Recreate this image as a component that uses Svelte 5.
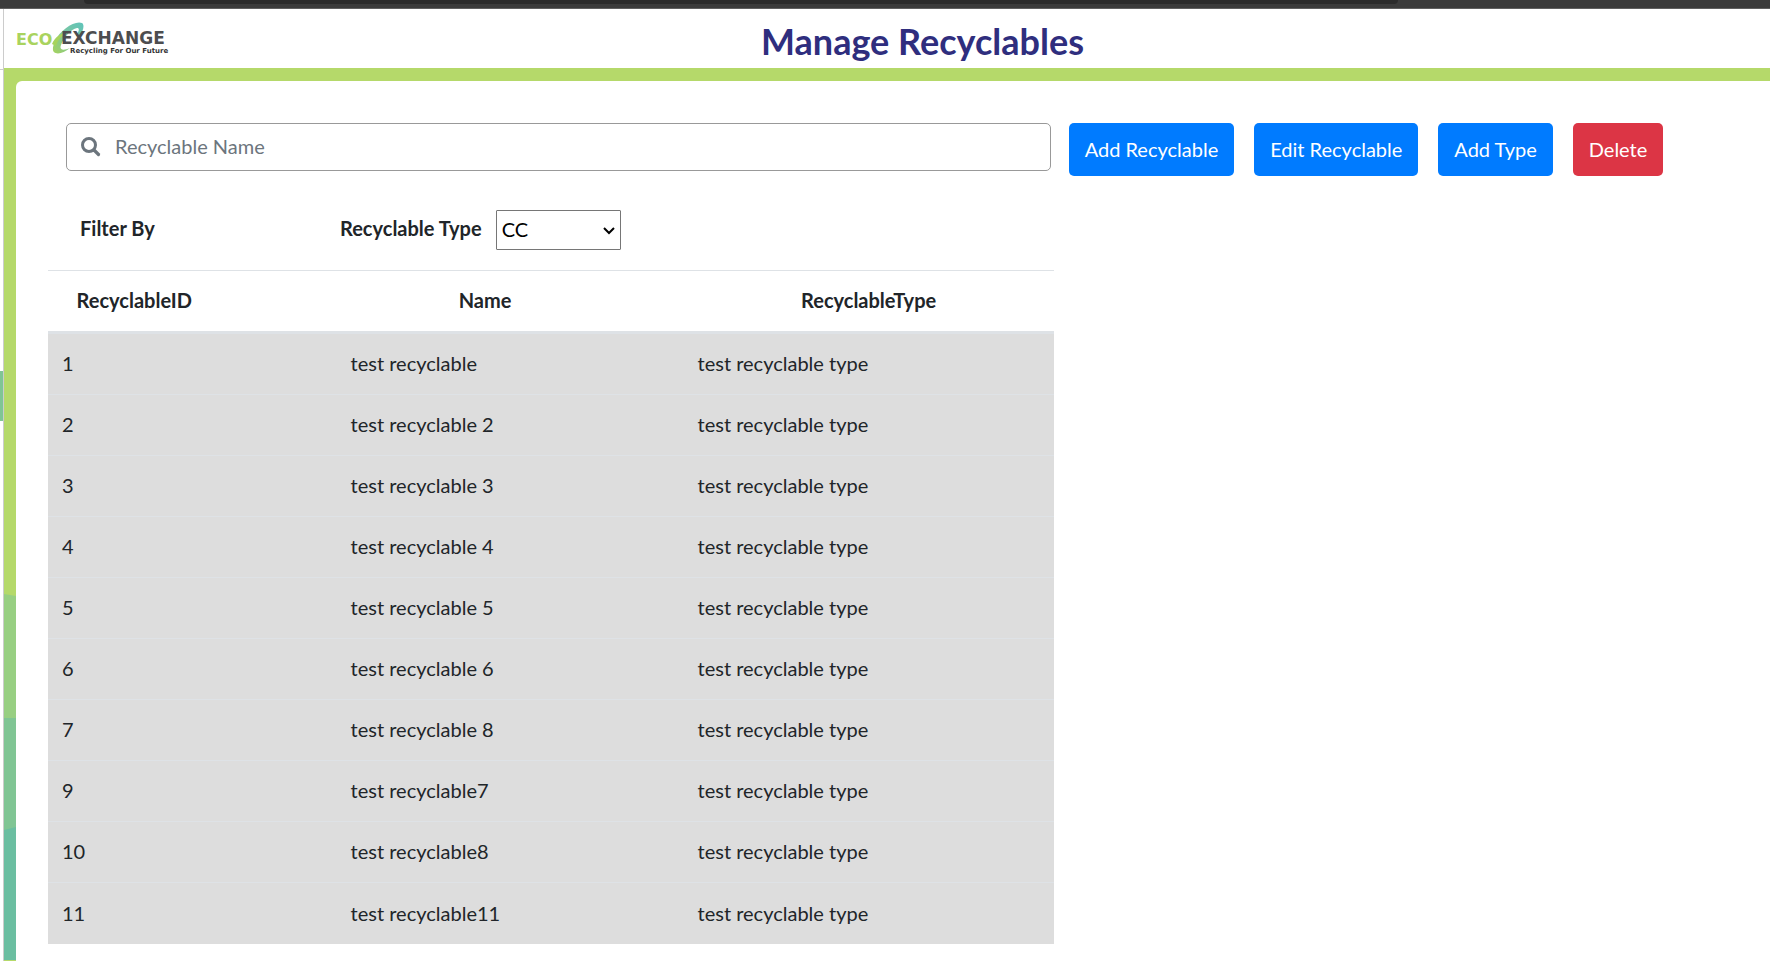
<script>
  let search = $state('')
  let selectedType = $state('CC')

  const types = ['CC', 'test recyclable type']

  const recyclables = [
    { id: 1, name: 'test recyclable', type: 'test recyclable type' },
    { id: 2, name: 'test recyclable 2', type: 'test recyclable type' },
    { id: 3, name: 'test recyclable 3', type: 'test recyclable type' },
    { id: 4, name: 'test recyclable 4', type: 'test recyclable type' },
    { id: 5, name: 'test recyclable 5', type: 'test recyclable type' },
    { id: 6, name: 'test recyclable 6', type: 'test recyclable type' },
    { id: 7, name: 'test recyclable 8', type: 'test recyclable type' },
    { id: 9, name: 'test recyclable7', type: 'test recyclable type' },
    { id: 10, name: 'test recyclable8', type: 'test recyclable type' },
    { id: 11, name: 'test recyclable11', type: 'test recyclable type' },
  ]

  let rows = $derived(
    recyclables.filter(r => r.name.toLowerCase().includes(search.trim().toLowerCase()))
  )
</script>

<div class="page">
  <div class="window-bar"><div class="address"></div></div>

  <div class="shell">
    <aside class="rail">
      <div class="rail-head"></div>
      <div class="rail-tab"></div>
    </aside>

    <div class="main">
      <header>
        <a class="logo" href="#home" aria-label="Eco Exchange home">
          <svg width="160" height="36" viewBox="0 0 160 36">
            <defs>
              <linearGradient id="swoosh" x1="1" y1="0" x2="0" y2="1">
                <stop offset="0" stop-color="#5fc4bb" />
                <stop offset="0.5" stop-color="#7cc6a0" />
                <stop offset="1" stop-color="#a6d35c" />
              </linearGradient>
            </defs>
            <path
              fill="url(#swoosh)"
              d="M69 2C62 -1 47 9 42 20C40 25 39 29 41 31C44 34 51 32 57 27C50 30 46 29 48 24C51 16 58 8 64 7C67 7 66 10 63 15H67C70 10 72 4 69 2Z"
            />
            <path fill="#a6d35c" d="M39 23C42 16 48 12 56 10C50 14 45 18 43 25Z" />
            <text class="word" x="3" y="24" fill="#a9d35e">ECO</text>
            <text class="word exchange" x="48" y="23" fill="#4d4d4f">EXCHANGE</text>
            <text class="tagline" x="57" y="32" fill="#333">Recycling For Our Future</text>
          </svg>
        </a>
        <h1>Manage Recyclables</h1>
      </header>

      <div class="backdrop">
        <svg class="waves" width="12" height="892" viewBox="0 0 12 892" aria-hidden="true">
          <path fill="#98cf82" d="M0 526L12 528V892H0Z" />
          <path fill="#80c594" d="M0 650H12V892H0Z" />
          <path fill="#6bbea1" d="M0 762L12 759V892H0Z" />
        </svg>

        <section class="card">
          <div class="left">
            <div class="search">
              <svg width="20" height="20" viewBox="0 0 20 20" aria-hidden="true">
                <circle cx="8" cy="8" r="6.500" fill="none" stroke="#6c757d" stroke-width="3" />
                <path d="M13 13L17.500 17.500" stroke="#6c757d" stroke-width="3.200" stroke-linecap="round" />
              </svg>
              <input type="text" placeholder="Recyclable Name" aria-label="Recyclable Name" bind:value={search} />
            </div>

            <div class="filters">
              <span class="filter-title">Filter By</span>
              <label for="type">Recyclable Type</label>
              <div class="select">
                <select id="type" bind:value={selectedType}>
                  {#each types as t}
                    <option value={t}>{t}</option>
                  {/each}
                </select>
                <svg width="12" height="8" viewBox="0 0 12 8" aria-hidden="true">
                  <path d="M1 1L6 6L11 1" fill="none" stroke="#000" stroke-width="2" />
                </svg>
              </div>
            </div>

            <table>
              <thead>
                <tr>
                  <th class="id">RecyclableID</th>
                  <th class="name">Name</th>
                  <th class="type">RecyclableType</th>
                </tr>
              </thead>
              <tbody>
                {#each rows as r (r.id)}
                  <tr>
                    <td>{r.id}</td>
                    <td>{r.name}</td>
                    <td>{r.type}</td>
                  </tr>
                {/each}
              </tbody>
            </table>
          </div>

          <div class="actions">
            <button type="button">Add Recyclable</button>
            <button type="button">Edit Recyclable</button>
            <button type="button">Add Type</button>
            <button type="button" class="danger">Delete</button>
          </div>
        </section>
      </div>
    </div>
  </div>
</div>

<style>
  :global(body) {
    background: #fff;
  }

  .page,
  .page * {
    box-sizing: border-box;
  }

  .page {
    min-height: 100vh;
    display: flex;
    flex-direction: column;
    font-family: Lato, sans-serif;
    font-size: 20px;
    line-height: 30px;
    color: #212529;
  }

  .window-bar {
    height: 9px;
    background: #3b3b3b;
    border-bottom: 1px solid #606060;
  }
  .address {
    width: 1314px;
    max-width: 80%;
    height: 4px;
    margin-left: 84px;
    background: #2b2b2b;
    border-radius: 0 0 4px 4px;
  }

  .shell {
    flex: 1;
    display: flex;
  }

  .rail {
    width: 4px;
    flex-shrink: 0;
    border-right: 1px solid #ccc;
  }
  .rail-head {
    height: 61px;
    border-bottom: 1px solid #ccc;
  }
  .rail-tab {
    height: 50px;
    margin-top: 301px;
    background: #80c594;
  }

  .main {
    flex: 1;
    min-width: 0;
    display: flex;
    flex-direction: column;
  }

  header {
    height: 59px;
    display: grid;
    grid-template-columns: 1fr auto 1fr;
    align-items: center;
  }
  .logo {
    display: flex;
    padding-left: 9px;
  }
  .word {
    font-family: "DejaVu Sans", sans-serif;
    font-size: 16px;
    font-weight: 700;
  }
  .word.exchange {
    font-size: 17px;
  }
  .tagline {
    font-family: "DejaVu Sans", sans-serif;
    font-size: 7px;
    font-weight: 700;
  }
  h1 {
    grid-column: 2;
    margin: 4px 0 0 71px;
    font-size: 36px;
    line-height: 44px;
    font-weight: 700;
    color: #2f2e7e;
  }

  .backdrop {
    flex: 1;
    display: flex;
    padding-top: 13px;
    padding-left: 12px;
    position: relative;
    overflow: hidden;
    background: #b5d96a;
  }
  .waves {
    position: absolute;
    left: 0;
    top: 0;
  }

  .card {
    flex: 1;
    display: grid;
    grid-template-columns: 58.4% 1fr;
    align-items: start;
    padding: 42px 0 12px 32px;
    background: #fff;
    border-top-left-radius: 6px;
  }

  .search {
    height: 48px;
    margin: 0 3px 0 18px;
    padding: 0 14px;
    display: flex;
    align-items: center;
    gap: 14px;
    border: 1px solid #999;
    border-radius: 5px;
  }
  .search input {
    flex: 1;
    min-width: 0;
    border: 0;
    outline: 0;
    padding: 0 0 2px;
    background: transparent;
    font: inherit;
    color: inherit;
  }
  .search input::placeholder {
    color: #6c757d;
    opacity: 1;
  }

  .filters {
    display: flex;
    align-items: center;
    height: 40px;
    margin: 39px 0 20px;
    padding-left: 32px;
    font-weight: 700;
  }
  .filter-title {
    width: 260px;
  }
  .filter-title,
  .filters label {
    padding-bottom: 4px;
  }
  .select {
    position: relative;
    margin-left: 14px;
  }
  .select select {
    width: 125px;
    height: 40px;
    padding: 0 24px 2px 5px;
    appearance: none;
    border: 1px solid #767676;
    border-radius: 1px;
    background: #fff;
    font: inherit;
    font-weight: 400;
    color: #000;
  }
  .select svg {
    position: absolute;
    right: 6px;
    top: 17px;
    pointer-events: none;
  }

  table {
    width: 100%;
    table-layout: fixed;
    border-collapse: separate;
    border-spacing: 0;
  }
  th {
    height: 64px;
    padding: 0 14px 2px;
    border-top: 1px solid #dee2e6;
    border-bottom: 3px solid #dee2e6;
    text-align: center;
  }
  th.id {
    width: 28.7%;
    padding-right: 130px;
  }
  th.name {
    width: 34.5%;
    padding-right: 64px;
  }
  td {
    height: 61px;
    padding: 0 14px 2px;
    background: #ddd;
    border-bottom: 1px solid #dee2e6;
  }
  tbody tr:last-child td {
    border-bottom: 0;
  }

  .actions {
    display: flex;
    flex-wrap: wrap;
    gap: 20px;
    padding-left: 15px;
  }
  .actions button {
    height: 53px;
    padding: 0 16px 2px;
    border: 0;
    border-radius: 5px;
    background: #007bff;
    color: #fff;
    font: inherit;
    cursor: pointer;
  }
  .actions button:hover {
    background: #0069d9;
  }
  .actions button.danger {
    background: #dc3545;
  }
</style>
